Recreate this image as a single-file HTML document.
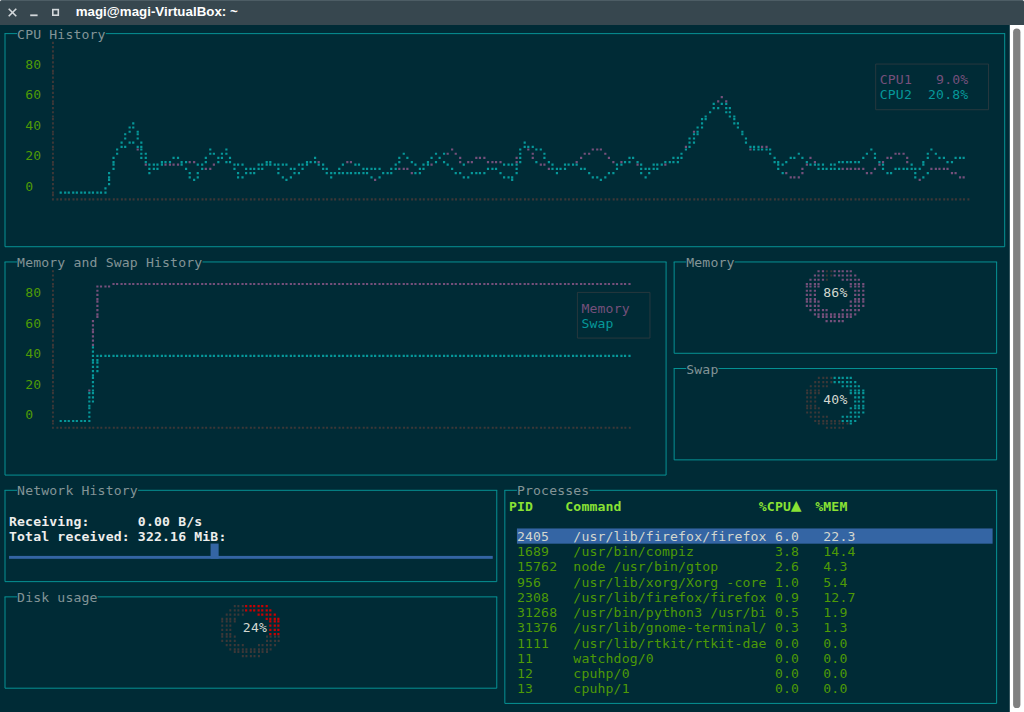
<!DOCTYPE html>
<html><head><meta charset="utf-8"><title>magi@magi-VirtualBox: ~</title>
<style>
html,body{margin:0;padding:0;}
body{width:1024px;height:712px;overflow:hidden;position:relative;background:#002b36;}
#tb{position:absolute;left:0;top:0;width:1024px;height:25px;background:#37474f;border-top:1px solid #4d5d65;box-sizing:border-box;}
#title{position:absolute;left:75.7px;top:3.0px;transform:translateY(0.45px);font:bold 13.3px/18px "Liberation Sans",sans-serif;color:#fff;white-space:pre;letter-spacing:0.02px}
#term{position:absolute;left:0;top:0;width:1024px;height:712px;}
svg{position:absolute;left:0;top:0}
.t{position:absolute;white-space:pre;font-family:"DejaVu Sans Mono","Liberation Mono",monospace;font-size:13.14px;line-height:15.223px;height:15.223px;letter-spacing:0.1511px;color:#839496}
.lab{color:#839496}
.g{color:#4e9a06} .m{color:#75507b} .c{color:#06989a} .w{color:#d3d7cf}
.bw{color:#eeeeec;font-weight:bold} .hb{color:#8ae234;font-weight:bold} .s{color:#d3d7cf}
#tri{position:absolute;left:790.7px;top:497.0px;font:14px/16px "DejaVu Sans","Liberation Sans",sans-serif;color:#8ae234;white-space:pre}
</style></head><body>
<div id="tb"></div>
<svg width="70" height="25" viewBox="0 0 70 25" fill="none" stroke="#d3d8db">
<path d="M8.7 8.7l7.6 7.6M16.3 8.7l-7.6 7.6" stroke-width="1.6"/>
<path d="M30.2 15.3h7.4" stroke-width="1.8"/>
<rect x="52.8" y="9.6" width="5.5" height="5.6" stroke-width="1.6"/>
</svg>
<div id="title">magi@magi-VirtualBox: ~</div>


<svg id="gfx" width="1024" height="712" viewBox="0 0 1024 712" fill="none">
<rect x="1009.8" y="25" width="14.2" height="687" fill="#fff"/>
<rect x="0" y="0" width="1.1" height="1.1" fill="#c3c8cb"/><rect x="1022.9" y="0" width="1.1" height="1.1" fill="#c3c8cb"/>
<rect x="1013.1" y="28.5" width="7.3" height="679.6" rx="3.65" fill="#808080"/>
<rect x="516.94" y="528.46" width="475.66" height="15.22" fill="#3465a4"/>
<path d="M4.53 33.61H17.09" stroke="#06989a" stroke-width="0.95"/>
<path d="M105.78 33.61H1005.16" stroke="#06989a" stroke-width="0.95"/>
<path d="M5.00 246.73H1004.69" stroke="#06989a" stroke-width="0.95"/>
<path d="M5.00 33.61V246.73" stroke="#06989a" stroke-width="0.95"/>
<path d="M1004.69 33.61V246.73" stroke="#06989a" stroke-width="0.95"/>
<path d="M59.61 191.54h2.18v2.18h-2.18zM64.06 191.54h2.18v2.18h-2.18zM67.68 191.54h2.18v2.18h-2.18zM72.13 191.54h2.18v2.18h-2.18zM75.74 191.54h2.18v2.18h-2.18zM80.19 191.54h2.18v2.18h-2.18zM83.80 191.54h2.18v2.18h-2.18zM88.25 191.54h2.18v2.18h-2.18zM91.86 191.54h2.18v2.18h-2.18zM96.31 191.54h2.18v2.18h-2.18zM99.92 191.54h2.18v2.18h-2.18zM104.37 187.29h2.18v2.18h-2.18zM104.37 191.54h2.18v2.18h-2.18zM107.99 172.07h2.18v2.18h-2.18zM107.99 176.32h2.18v2.18h-2.18zM107.99 178.84h2.18v2.18h-2.18zM107.99 183.09h2.18v2.18h-2.18zM112.44 156.84h2.18v2.18h-2.18zM112.44 161.09h2.18v2.18h-2.18zM112.44 163.62h2.18v2.18h-2.18zM112.44 167.87h2.18v2.18h-2.18zM116.05 148.39h2.18v2.18h-2.18zM116.05 152.64h2.18v2.18h-2.18zM120.50 141.62h2.18v2.18h-2.18zM120.50 145.87h2.18v2.18h-2.18zM124.11 133.17h2.18v2.18h-2.18zM124.11 137.42h2.18v2.18h-2.18zM124.11 145.87h2.18v2.18h-2.18zM128.56 126.40h2.18v2.18h-2.18zM128.56 130.65h2.18v2.18h-2.18zM128.56 141.62h2.18v2.18h-2.18zM132.17 122.20h2.18v2.18h-2.18zM132.17 126.40h2.18v2.18h-2.18zM132.17 141.62h2.18v2.18h-2.18zM136.62 130.65h2.18v2.18h-2.18zM136.62 133.17h2.18v2.18h-2.18zM136.62 137.42h2.18v2.18h-2.18zM136.62 145.87h2.18v2.18h-2.18zM140.23 141.62h2.18v2.18h-2.18zM140.23 145.87h2.18v2.18h-2.18zM140.23 148.39h2.18v2.18h-2.18zM140.23 152.64h2.18v2.18h-2.18zM140.23 156.84h2.18v2.18h-2.18zM144.68 152.64h2.18v2.18h-2.18zM144.68 156.84h2.18v2.18h-2.18zM144.68 161.09h2.18v2.18h-2.18zM148.30 163.62h2.18v2.18h-2.18zM148.30 167.87h2.18v2.18h-2.18zM148.30 172.07h2.18v2.18h-2.18zM152.75 163.62h2.18v2.18h-2.18zM152.75 167.87h2.18v2.18h-2.18zM156.36 163.62h2.18v2.18h-2.18zM156.36 167.87h2.18v2.18h-2.18zM160.81 161.09h2.18v2.18h-2.18zM160.81 163.62h2.18v2.18h-2.18zM164.42 161.09h2.18v2.18h-2.18zM168.87 161.09h2.18v2.18h-2.18zM172.48 156.84h2.18v2.18h-2.18zM176.93 156.84h2.18v2.18h-2.18zM180.54 161.09h2.18v2.18h-2.18zM180.54 163.62h2.18v2.18h-2.18zM184.99 161.09h2.18v2.18h-2.18zM184.99 167.87h2.18v2.18h-2.18zM188.61 172.07h2.18v2.18h-2.18zM188.61 176.32h2.18v2.18h-2.18zM193.06 178.84h2.18v2.18h-2.18zM196.67 163.62h2.18v2.18h-2.18zM196.67 172.07h2.18v2.18h-2.18zM196.67 176.32h2.18v2.18h-2.18zM201.12 163.62h2.18v2.18h-2.18zM201.12 167.87h2.18v2.18h-2.18zM204.73 156.84h2.18v2.18h-2.18zM204.73 161.09h2.18v2.18h-2.18zM209.18 148.39h2.18v2.18h-2.18zM209.18 152.64h2.18v2.18h-2.18zM212.79 152.64h2.18v2.18h-2.18zM217.24 156.84h2.18v2.18h-2.18zM217.24 161.09h2.18v2.18h-2.18zM220.85 152.64h2.18v2.18h-2.18zM220.85 156.84h2.18v2.18h-2.18zM225.30 148.39h2.18v2.18h-2.18zM225.30 152.64h2.18v2.18h-2.18zM225.30 161.09h2.18v2.18h-2.18zM228.92 156.84h2.18v2.18h-2.18zM228.92 161.09h2.18v2.18h-2.18zM233.37 163.62h2.18v2.18h-2.18zM233.37 167.87h2.18v2.18h-2.18zM236.98 163.62h2.18v2.18h-2.18zM236.98 172.07h2.18v2.18h-2.18zM236.98 176.32h2.18v2.18h-2.18zM241.43 163.62h2.18v2.18h-2.18zM241.43 176.32h2.18v2.18h-2.18zM245.04 167.87h2.18v2.18h-2.18zM245.04 172.07h2.18v2.18h-2.18zM249.49 167.87h2.18v2.18h-2.18zM249.49 172.07h2.18v2.18h-2.18zM253.10 167.87h2.18v2.18h-2.18zM253.10 172.07h2.18v2.18h-2.18zM257.55 163.62h2.18v2.18h-2.18zM257.55 167.87h2.18v2.18h-2.18zM261.16 163.62h2.18v2.18h-2.18zM261.16 167.87h2.18v2.18h-2.18zM265.61 161.09h2.18v2.18h-2.18zM265.61 163.62h2.18v2.18h-2.18zM269.23 161.09h2.18v2.18h-2.18zM269.23 163.62h2.18v2.18h-2.18zM273.68 163.62h2.18v2.18h-2.18zM277.29 163.62h2.18v2.18h-2.18zM277.29 167.87h2.18v2.18h-2.18zM277.29 172.07h2.18v2.18h-2.18zM281.74 163.62h2.18v2.18h-2.18zM281.74 176.32h2.18v2.18h-2.18zM285.35 163.62h2.18v2.18h-2.18zM285.35 178.84h2.18v2.18h-2.18zM289.80 167.87h2.18v2.18h-2.18zM289.80 176.32h2.18v2.18h-2.18zM293.41 167.87h2.18v2.18h-2.18zM293.41 172.07h2.18v2.18h-2.18zM297.86 163.62h2.18v2.18h-2.18zM297.86 172.07h2.18v2.18h-2.18zM301.47 163.62h2.18v2.18h-2.18zM301.47 167.87h2.18v2.18h-2.18zM305.92 161.09h2.18v2.18h-2.18zM305.92 163.62h2.18v2.18h-2.18zM309.54 161.09h2.18v2.18h-2.18zM313.99 156.84h2.18v2.18h-2.18zM313.99 161.09h2.18v2.18h-2.18zM317.60 163.62h2.18v2.18h-2.18zM322.05 163.62h2.18v2.18h-2.18zM322.05 167.87h2.18v2.18h-2.18zM325.66 167.87h2.18v2.18h-2.18zM325.66 172.07h2.18v2.18h-2.18zM330.11 172.07h2.18v2.18h-2.18zM330.11 176.32h2.18v2.18h-2.18zM333.72 172.07h2.18v2.18h-2.18zM338.17 167.87h2.18v2.18h-2.18zM338.17 172.07h2.18v2.18h-2.18zM341.78 163.62h2.18v2.18h-2.18zM341.78 172.07h2.18v2.18h-2.18zM346.23 172.07h2.18v2.18h-2.18zM349.85 172.07h2.18v2.18h-2.18zM354.30 163.62h2.18v2.18h-2.18zM354.30 172.07h2.18v2.18h-2.18zM357.91 163.62h2.18v2.18h-2.18zM357.91 172.07h2.18v2.18h-2.18zM362.36 167.87h2.18v2.18h-2.18zM362.36 172.07h2.18v2.18h-2.18zM365.97 167.87h2.18v2.18h-2.18zM365.97 172.07h2.18v2.18h-2.18zM370.42 167.87h2.18v2.18h-2.18zM370.42 176.32h2.18v2.18h-2.18zM374.03 167.87h2.18v2.18h-2.18zM378.48 167.87h2.18v2.18h-2.18zM378.48 176.32h2.18v2.18h-2.18zM382.09 172.07h2.18v2.18h-2.18zM386.54 172.07h2.18v2.18h-2.18zM390.16 167.87h2.18v2.18h-2.18zM390.16 172.07h2.18v2.18h-2.18zM394.61 163.62h2.18v2.18h-2.18zM394.61 167.87h2.18v2.18h-2.18zM398.22 156.84h2.18v2.18h-2.18zM398.22 161.09h2.18v2.18h-2.18zM402.67 152.64h2.18v2.18h-2.18zM406.28 156.84h2.18v2.18h-2.18zM410.73 161.09h2.18v2.18h-2.18zM414.34 163.62h2.18v2.18h-2.18zM414.34 172.07h2.18v2.18h-2.18zM418.79 167.87h2.18v2.18h-2.18zM418.79 172.07h2.18v2.18h-2.18zM422.40 163.62h2.18v2.18h-2.18zM422.40 167.87h2.18v2.18h-2.18zM426.85 161.09h2.18v2.18h-2.18zM426.85 163.62h2.18v2.18h-2.18zM430.47 156.84h2.18v2.18h-2.18zM434.92 152.64h2.18v2.18h-2.18zM434.92 161.09h2.18v2.18h-2.18zM438.53 156.84h2.18v2.18h-2.18zM442.98 152.64h2.18v2.18h-2.18zM442.98 161.09h2.18v2.18h-2.18zM446.59 163.62h2.18v2.18h-2.18zM451.04 167.87h2.18v2.18h-2.18zM454.65 172.07h2.18v2.18h-2.18zM459.10 172.07h2.18v2.18h-2.18zM462.71 163.62h2.18v2.18h-2.18zM462.71 176.32h2.18v2.18h-2.18zM467.16 176.32h2.18v2.18h-2.18zM470.78 172.07h2.18v2.18h-2.18zM475.23 172.07h2.18v2.18h-2.18zM478.84 172.07h2.18v2.18h-2.18zM483.29 172.07h2.18v2.18h-2.18zM486.90 167.87h2.18v2.18h-2.18zM491.35 167.87h2.18v2.18h-2.18zM494.96 167.87h2.18v2.18h-2.18zM499.41 172.07h2.18v2.18h-2.18zM503.02 163.62h2.18v2.18h-2.18zM503.02 176.32h2.18v2.18h-2.18zM507.47 163.62h2.18v2.18h-2.18zM507.47 176.32h2.18v2.18h-2.18zM511.09 163.62h2.18v2.18h-2.18zM511.09 176.32h2.18v2.18h-2.18zM511.09 178.84h2.18v2.18h-2.18zM515.54 163.62h2.18v2.18h-2.18zM515.54 167.87h2.18v2.18h-2.18zM515.54 172.07h2.18v2.18h-2.18zM519.15 148.39h2.18v2.18h-2.18zM519.15 152.64h2.18v2.18h-2.18zM519.15 156.84h2.18v2.18h-2.18zM519.15 161.09h2.18v2.18h-2.18zM523.60 141.62h2.18v2.18h-2.18zM523.60 145.87h2.18v2.18h-2.18zM527.21 145.87h2.18v2.18h-2.18zM531.66 145.87h2.18v2.18h-2.18zM535.27 148.39h2.18v2.18h-2.18zM535.27 161.09h2.18v2.18h-2.18zM539.72 148.39h2.18v2.18h-2.18zM543.33 152.64h2.18v2.18h-2.18zM543.33 156.84h2.18v2.18h-2.18zM547.78 161.09h2.18v2.18h-2.18zM551.40 163.62h2.18v2.18h-2.18zM551.40 167.87h2.18v2.18h-2.18zM555.85 167.87h2.18v2.18h-2.18zM555.85 172.07h2.18v2.18h-2.18zM559.46 167.87h2.18v2.18h-2.18zM563.91 163.62h2.18v2.18h-2.18zM563.91 167.87h2.18v2.18h-2.18zM567.52 163.62h2.18v2.18h-2.18zM571.97 163.62h2.18v2.18h-2.18zM575.58 163.62h2.18v2.18h-2.18zM580.03 167.87h2.18v2.18h-2.18zM583.64 167.87h2.18v2.18h-2.18zM588.09 172.07h2.18v2.18h-2.18zM591.71 176.32h2.18v2.18h-2.18zM596.16 176.32h2.18v2.18h-2.18zM599.77 178.84h2.18v2.18h-2.18zM604.22 176.32h2.18v2.18h-2.18zM607.83 172.07h2.18v2.18h-2.18zM612.28 172.07h2.18v2.18h-2.18zM615.89 163.62h2.18v2.18h-2.18zM615.89 167.87h2.18v2.18h-2.18zM620.34 163.62h2.18v2.18h-2.18zM623.95 161.09h2.18v2.18h-2.18zM628.40 156.84h2.18v2.18h-2.18zM628.40 161.09h2.18v2.18h-2.18zM632.02 156.84h2.18v2.18h-2.18zM636.47 161.09h2.18v2.18h-2.18zM640.08 163.62h2.18v2.18h-2.18zM640.08 167.87h2.18v2.18h-2.18zM640.08 172.07h2.18v2.18h-2.18zM644.53 167.87h2.18v2.18h-2.18zM644.53 176.32h2.18v2.18h-2.18zM648.14 167.87h2.18v2.18h-2.18zM648.14 172.07h2.18v2.18h-2.18zM652.59 163.62h2.18v2.18h-2.18zM652.59 167.87h2.18v2.18h-2.18zM656.20 163.62h2.18v2.18h-2.18zM656.20 167.87h2.18v2.18h-2.18zM660.65 163.62h2.18v2.18h-2.18zM664.26 161.09h2.18v2.18h-2.18zM668.71 161.09h2.18v2.18h-2.18zM672.33 156.84h2.18v2.18h-2.18zM672.33 161.09h2.18v2.18h-2.18zM676.78 156.84h2.18v2.18h-2.18zM676.78 161.09h2.18v2.18h-2.18zM680.39 152.64h2.18v2.18h-2.18zM680.39 156.84h2.18v2.18h-2.18zM684.84 148.39h2.18v2.18h-2.18zM688.45 137.42h2.18v2.18h-2.18zM688.45 141.62h2.18v2.18h-2.18zM688.45 145.87h2.18v2.18h-2.18zM692.90 133.17h2.18v2.18h-2.18zM692.90 137.42h2.18v2.18h-2.18zM692.90 141.62h2.18v2.18h-2.18zM696.51 126.40h2.18v2.18h-2.18zM696.51 130.65h2.18v2.18h-2.18zM696.51 133.17h2.18v2.18h-2.18zM700.96 117.95h2.18v2.18h-2.18zM700.96 122.20h2.18v2.18h-2.18zM700.96 126.40h2.18v2.18h-2.18zM704.57 115.43h2.18v2.18h-2.18zM704.57 117.95h2.18v2.18h-2.18zM709.02 111.18h2.18v2.18h-2.18zM712.64 102.73h2.18v2.18h-2.18zM712.64 106.98h2.18v2.18h-2.18zM717.09 106.98h2.18v2.18h-2.18zM720.70 102.73h2.18v2.18h-2.18zM725.15 102.73h2.18v2.18h-2.18zM725.15 106.98h2.18v2.18h-2.18zM725.15 111.18h2.18v2.18h-2.18zM728.76 106.98h2.18v2.18h-2.18zM728.76 111.18h2.18v2.18h-2.18zM728.76 115.43h2.18v2.18h-2.18zM733.21 115.43h2.18v2.18h-2.18zM733.21 117.95h2.18v2.18h-2.18zM733.21 122.20h2.18v2.18h-2.18zM736.82 122.20h2.18v2.18h-2.18zM736.82 126.40h2.18v2.18h-2.18zM741.27 130.65h2.18v2.18h-2.18zM741.27 133.17h2.18v2.18h-2.18zM744.88 137.42h2.18v2.18h-2.18zM744.88 141.62h2.18v2.18h-2.18zM749.33 145.87h2.18v2.18h-2.18zM752.95 145.87h2.18v2.18h-2.18zM752.95 148.39h2.18v2.18h-2.18zM757.40 145.87h2.18v2.18h-2.18zM757.40 148.39h2.18v2.18h-2.18zM761.01 148.39h2.18v2.18h-2.18zM765.46 148.39h2.18v2.18h-2.18zM769.07 148.39h2.18v2.18h-2.18zM769.07 152.64h2.18v2.18h-2.18zM773.52 156.84h2.18v2.18h-2.18zM773.52 161.09h2.18v2.18h-2.18zM777.13 161.09h2.18v2.18h-2.18zM777.13 163.62h2.18v2.18h-2.18zM777.13 167.87h2.18v2.18h-2.18zM781.58 163.62h2.18v2.18h-2.18zM781.58 172.07h2.18v2.18h-2.18zM785.19 161.09h2.18v2.18h-2.18zM789.64 156.84h2.18v2.18h-2.18zM793.26 156.84h2.18v2.18h-2.18zM797.71 152.64h2.18v2.18h-2.18zM801.32 156.84h2.18v2.18h-2.18zM805.77 161.09h2.18v2.18h-2.18zM809.38 163.62h2.18v2.18h-2.18zM813.83 163.62h2.18v2.18h-2.18zM817.44 163.62h2.18v2.18h-2.18zM817.44 167.87h2.18v2.18h-2.18zM821.89 163.62h2.18v2.18h-2.18zM821.89 167.87h2.18v2.18h-2.18zM825.50 167.87h2.18v2.18h-2.18zM829.95 163.62h2.18v2.18h-2.18zM829.95 167.87h2.18v2.18h-2.18zM833.57 163.62h2.18v2.18h-2.18zM833.57 167.87h2.18v2.18h-2.18zM838.02 161.09h2.18v2.18h-2.18zM838.02 167.87h2.18v2.18h-2.18zM841.63 161.09h2.18v2.18h-2.18zM846.08 161.09h2.18v2.18h-2.18zM849.69 161.09h2.18v2.18h-2.18zM854.14 161.09h2.18v2.18h-2.18zM857.75 161.09h2.18v2.18h-2.18zM862.20 156.84h2.18v2.18h-2.18zM865.81 152.64h2.18v2.18h-2.18zM870.26 148.39h2.18v2.18h-2.18zM873.88 152.64h2.18v2.18h-2.18zM873.88 156.84h2.18v2.18h-2.18zM878.33 161.09h2.18v2.18h-2.18zM881.94 163.62h2.18v2.18h-2.18zM881.94 167.87h2.18v2.18h-2.18zM886.39 172.07h2.18v2.18h-2.18zM890.00 172.07h2.18v2.18h-2.18zM894.45 167.87h2.18v2.18h-2.18zM898.06 167.87h2.18v2.18h-2.18zM902.51 167.87h2.18v2.18h-2.18zM906.12 167.87h2.18v2.18h-2.18zM910.57 163.62h2.18v2.18h-2.18zM910.57 167.87h2.18v2.18h-2.18zM914.19 167.87h2.18v2.18h-2.18zM914.19 172.07h2.18v2.18h-2.18zM914.19 176.32h2.18v2.18h-2.18zM918.64 167.87h2.18v2.18h-2.18zM922.25 161.09h2.18v2.18h-2.18zM922.25 163.62h2.18v2.18h-2.18zM922.25 176.32h2.18v2.18h-2.18zM926.70 152.64h2.18v2.18h-2.18zM926.70 156.84h2.18v2.18h-2.18zM926.70 172.07h2.18v2.18h-2.18zM930.31 148.39h2.18v2.18h-2.18zM934.76 152.64h2.18v2.18h-2.18zM938.37 156.84h2.18v2.18h-2.18zM942.82 156.84h2.18v2.18h-2.18zM946.43 161.09h2.18v2.18h-2.18zM950.88 161.09h2.18v2.18h-2.18zM954.50 156.84h2.18v2.18h-2.18zM958.95 156.84h2.18v2.18h-2.18zM962.56 156.84h2.18v2.18h-2.18z" fill="#06989a"/>
<path d="M136.62 148.39h2.18v2.18h-2.18zM144.68 163.62h2.18v2.18h-2.18zM164.42 163.62h2.18v2.18h-2.18zM168.87 163.62h2.18v2.18h-2.18zM172.48 163.62h2.18v2.18h-2.18zM176.93 163.62h2.18v2.18h-2.18zM188.61 161.09h2.18v2.18h-2.18zM193.06 161.09h2.18v2.18h-2.18zM204.73 167.87h2.18v2.18h-2.18zM209.18 167.87h2.18v2.18h-2.18zM212.79 163.62h2.18v2.18h-2.18zM317.60 161.09h2.18v2.18h-2.18zM346.23 161.09h2.18v2.18h-2.18zM349.85 161.09h2.18v2.18h-2.18zM374.03 178.84h2.18v2.18h-2.18zM398.22 167.87h2.18v2.18h-2.18zM402.67 167.87h2.18v2.18h-2.18zM406.28 167.87h2.18v2.18h-2.18zM410.73 172.07h2.18v2.18h-2.18zM430.47 163.62h2.18v2.18h-2.18zM446.59 152.64h2.18v2.18h-2.18zM451.04 148.39h2.18v2.18h-2.18zM454.65 152.64h2.18v2.18h-2.18zM459.10 156.84h2.18v2.18h-2.18zM459.10 161.09h2.18v2.18h-2.18zM467.16 161.09h2.18v2.18h-2.18zM470.78 161.09h2.18v2.18h-2.18zM475.23 156.84h2.18v2.18h-2.18zM478.84 156.84h2.18v2.18h-2.18zM483.29 156.84h2.18v2.18h-2.18zM486.90 161.09h2.18v2.18h-2.18zM491.35 161.09h2.18v2.18h-2.18zM494.96 161.09h2.18v2.18h-2.18zM499.41 161.09h2.18v2.18h-2.18zM515.54 156.84h2.18v2.18h-2.18zM515.54 161.09h2.18v2.18h-2.18zM527.21 148.39h2.18v2.18h-2.18zM531.66 152.64h2.18v2.18h-2.18zM531.66 156.84h2.18v2.18h-2.18zM539.72 163.62h2.18v2.18h-2.18zM543.33 163.62h2.18v2.18h-2.18zM547.78 167.87h2.18v2.18h-2.18zM575.58 161.09h2.18v2.18h-2.18zM580.03 156.84h2.18v2.18h-2.18zM583.64 152.64h2.18v2.18h-2.18zM588.09 152.64h2.18v2.18h-2.18zM591.71 148.39h2.18v2.18h-2.18zM596.16 148.39h2.18v2.18h-2.18zM599.77 148.39h2.18v2.18h-2.18zM604.22 152.64h2.18v2.18h-2.18zM607.83 156.84h2.18v2.18h-2.18zM612.28 161.09h2.18v2.18h-2.18zM620.34 161.09h2.18v2.18h-2.18zM636.47 163.62h2.18v2.18h-2.18zM664.26 163.62h2.18v2.18h-2.18zM684.84 145.87h2.18v2.18h-2.18zM692.90 130.65h2.18v2.18h-2.18zM717.09 100.20h2.18v2.18h-2.18zM720.70 95.95h2.18v2.18h-2.18zM725.15 100.20h2.18v2.18h-2.18zM749.33 148.39h2.18v2.18h-2.18zM761.01 145.87h2.18v2.18h-2.18zM765.46 145.87h2.18v2.18h-2.18zM785.19 172.07h2.18v2.18h-2.18zM789.64 176.32h2.18v2.18h-2.18zM793.26 176.32h2.18v2.18h-2.18zM797.71 176.32h2.18v2.18h-2.18zM801.32 167.87h2.18v2.18h-2.18zM801.32 172.07h2.18v2.18h-2.18zM805.77 163.62h2.18v2.18h-2.18zM809.38 156.84h2.18v2.18h-2.18zM813.83 161.09h2.18v2.18h-2.18zM841.63 167.87h2.18v2.18h-2.18zM846.08 167.87h2.18v2.18h-2.18zM849.69 167.87h2.18v2.18h-2.18zM854.14 167.87h2.18v2.18h-2.18zM857.75 167.87h2.18v2.18h-2.18zM862.20 167.87h2.18v2.18h-2.18zM865.81 172.07h2.18v2.18h-2.18zM870.26 172.07h2.18v2.18h-2.18zM873.88 167.87h2.18v2.18h-2.18zM878.33 163.62h2.18v2.18h-2.18zM881.94 161.09h2.18v2.18h-2.18zM886.39 156.84h2.18v2.18h-2.18zM890.00 156.84h2.18v2.18h-2.18zM894.45 152.64h2.18v2.18h-2.18zM898.06 152.64h2.18v2.18h-2.18zM902.51 152.64h2.18v2.18h-2.18zM906.12 156.84h2.18v2.18h-2.18zM906.12 161.09h2.18v2.18h-2.18zM918.64 178.84h2.18v2.18h-2.18zM930.31 167.87h2.18v2.18h-2.18zM934.76 167.87h2.18v2.18h-2.18zM938.37 167.87h2.18v2.18h-2.18zM942.82 167.87h2.18v2.18h-2.18zM946.43 167.87h2.18v2.18h-2.18zM950.88 172.07h2.18v2.18h-2.18zM954.50 172.07h2.18v2.18h-2.18zM958.95 176.32h2.18v2.18h-2.18zM962.56 176.32h2.18v2.18h-2.18z" fill="#75507b"/>
<path d="M51.94 41.83h2.0v2.18h-2.0zM51.94 46.08h2.0v2.18h-2.0zM51.94 50.28h2.0v2.18h-2.0zM51.94 54.53h2.0v2.18h-2.0zM51.94 57.06h2.0v2.18h-2.0zM51.94 61.31h2.0v2.18h-2.0zM51.94 65.51h2.0v2.18h-2.0zM51.94 69.76h2.0v2.18h-2.0zM51.94 72.28h2.0v2.18h-2.0zM51.94 76.53h2.0v2.18h-2.0zM51.94 80.73h2.0v2.18h-2.0zM51.94 84.98h2.0v2.18h-2.0zM51.94 87.50h2.0v2.18h-2.0zM51.94 91.75h2.0v2.18h-2.0zM51.94 95.95h2.0v2.18h-2.0zM51.94 100.20h2.0v2.18h-2.0zM51.94 102.73h2.0v2.18h-2.0zM51.94 106.98h2.0v2.18h-2.0zM51.94 111.18h2.0v2.18h-2.0zM51.94 115.43h2.0v2.18h-2.0zM51.94 117.95h2.0v2.18h-2.0zM51.94 122.20h2.0v2.18h-2.0zM51.94 126.40h2.0v2.18h-2.0zM51.94 130.65h2.0v2.18h-2.0zM51.94 133.17h2.0v2.18h-2.0zM51.94 137.42h2.0v2.18h-2.0zM51.94 141.62h2.0v2.18h-2.0zM51.94 145.87h2.0v2.18h-2.0zM51.94 148.39h2.0v2.18h-2.0zM51.94 152.64h2.0v2.18h-2.0zM51.94 156.84h2.0v2.18h-2.0zM51.94 161.09h2.0v2.18h-2.0zM51.94 163.62h2.0v2.18h-2.0zM51.94 167.87h2.0v2.18h-2.0zM51.94 172.07h2.0v2.18h-2.0zM51.94 176.32h2.0v2.18h-2.0zM51.94 178.84h2.0v2.18h-2.0zM51.94 183.09h2.0v2.18h-2.0zM51.94 187.29h2.0v2.18h-2.0zM51.94 191.54h2.0v2.18h-2.0zM51.94 194.06h2.0v2.18h-2.0zM51.94 198.31h2.0v2.18h-2.0zM56.39 198.31h2.0v2.18h-2.0zM60.00 198.31h2.0v2.18h-2.0zM64.45 198.31h2.0v2.18h-2.0zM68.07 198.31h2.0v2.18h-2.0zM72.52 198.31h2.0v2.18h-2.0zM76.13 198.31h2.0v2.18h-2.0zM80.58 198.31h2.0v2.18h-2.0zM84.19 198.31h2.0v2.18h-2.0zM88.64 198.31h2.0v2.18h-2.0zM92.25 198.31h2.0v2.18h-2.0zM96.70 198.31h2.0v2.18h-2.0zM100.31 198.31h2.0v2.18h-2.0zM104.76 198.31h2.0v2.18h-2.0zM108.38 198.31h2.0v2.18h-2.0zM112.83 198.31h2.0v2.18h-2.0zM116.44 198.31h2.0v2.18h-2.0zM120.89 198.31h2.0v2.18h-2.0zM124.50 198.31h2.0v2.18h-2.0zM128.95 198.31h2.0v2.18h-2.0zM132.56 198.31h2.0v2.18h-2.0zM137.01 198.31h2.0v2.18h-2.0zM140.62 198.31h2.0v2.18h-2.0zM145.07 198.31h2.0v2.18h-2.0zM148.69 198.31h2.0v2.18h-2.0zM153.14 198.31h2.0v2.18h-2.0zM156.75 198.31h2.0v2.18h-2.0zM161.20 198.31h2.0v2.18h-2.0zM164.81 198.31h2.0v2.18h-2.0zM169.26 198.31h2.0v2.18h-2.0zM172.87 198.31h2.0v2.18h-2.0zM177.32 198.31h2.0v2.18h-2.0zM180.93 198.31h2.0v2.18h-2.0zM185.38 198.31h2.0v2.18h-2.0zM189.00 198.31h2.0v2.18h-2.0zM193.45 198.31h2.0v2.18h-2.0zM197.06 198.31h2.0v2.18h-2.0zM201.51 198.31h2.0v2.18h-2.0zM205.12 198.31h2.0v2.18h-2.0zM209.57 198.31h2.0v2.18h-2.0zM213.18 198.31h2.0v2.18h-2.0zM217.63 198.31h2.0v2.18h-2.0zM221.24 198.31h2.0v2.18h-2.0zM225.69 198.31h2.0v2.18h-2.0zM229.31 198.31h2.0v2.18h-2.0zM233.76 198.31h2.0v2.18h-2.0zM237.37 198.31h2.0v2.18h-2.0zM241.82 198.31h2.0v2.18h-2.0zM245.43 198.31h2.0v2.18h-2.0zM249.88 198.31h2.0v2.18h-2.0zM253.49 198.31h2.0v2.18h-2.0zM257.94 198.31h2.0v2.18h-2.0zM261.55 198.31h2.0v2.18h-2.0zM266.00 198.31h2.0v2.18h-2.0zM269.62 198.31h2.0v2.18h-2.0zM274.07 198.31h2.0v2.18h-2.0zM277.68 198.31h2.0v2.18h-2.0zM282.13 198.31h2.0v2.18h-2.0zM285.74 198.31h2.0v2.18h-2.0zM290.19 198.31h2.0v2.18h-2.0zM293.80 198.31h2.0v2.18h-2.0zM298.25 198.31h2.0v2.18h-2.0zM301.86 198.31h2.0v2.18h-2.0zM306.31 198.31h2.0v2.18h-2.0zM309.93 198.31h2.0v2.18h-2.0zM314.38 198.31h2.0v2.18h-2.0zM317.99 198.31h2.0v2.18h-2.0zM322.44 198.31h2.0v2.18h-2.0zM326.05 198.31h2.0v2.18h-2.0zM330.50 198.31h2.0v2.18h-2.0zM334.11 198.31h2.0v2.18h-2.0zM338.56 198.31h2.0v2.18h-2.0zM342.17 198.31h2.0v2.18h-2.0zM346.62 198.31h2.0v2.18h-2.0zM350.24 198.31h2.0v2.18h-2.0zM354.69 198.31h2.0v2.18h-2.0zM358.30 198.31h2.0v2.18h-2.0zM362.75 198.31h2.0v2.18h-2.0zM366.36 198.31h2.0v2.18h-2.0zM370.81 198.31h2.0v2.18h-2.0zM374.42 198.31h2.0v2.18h-2.0zM378.87 198.31h2.0v2.18h-2.0zM382.48 198.31h2.0v2.18h-2.0zM386.93 198.31h2.0v2.18h-2.0zM390.55 198.31h2.0v2.18h-2.0zM395.00 198.31h2.0v2.18h-2.0zM398.61 198.31h2.0v2.18h-2.0zM403.06 198.31h2.0v2.18h-2.0zM406.67 198.31h2.0v2.18h-2.0zM411.12 198.31h2.0v2.18h-2.0zM414.73 198.31h2.0v2.18h-2.0zM419.18 198.31h2.0v2.18h-2.0zM422.79 198.31h2.0v2.18h-2.0zM427.24 198.31h2.0v2.18h-2.0zM430.86 198.31h2.0v2.18h-2.0zM435.31 198.31h2.0v2.18h-2.0zM438.92 198.31h2.0v2.18h-2.0zM443.37 198.31h2.0v2.18h-2.0zM446.98 198.31h2.0v2.18h-2.0zM451.43 198.31h2.0v2.18h-2.0zM455.04 198.31h2.0v2.18h-2.0zM459.49 198.31h2.0v2.18h-2.0zM463.10 198.31h2.0v2.18h-2.0zM467.55 198.31h2.0v2.18h-2.0zM471.17 198.31h2.0v2.18h-2.0zM475.62 198.31h2.0v2.18h-2.0zM479.23 198.31h2.0v2.18h-2.0zM483.68 198.31h2.0v2.18h-2.0zM487.29 198.31h2.0v2.18h-2.0zM491.74 198.31h2.0v2.18h-2.0zM495.35 198.31h2.0v2.18h-2.0zM499.80 198.31h2.0v2.18h-2.0zM503.41 198.31h2.0v2.18h-2.0zM507.86 198.31h2.0v2.18h-2.0zM511.48 198.31h2.0v2.18h-2.0zM515.93 198.31h2.0v2.18h-2.0zM519.54 198.31h2.0v2.18h-2.0zM523.99 198.31h2.0v2.18h-2.0zM527.60 198.31h2.0v2.18h-2.0zM532.05 198.31h2.0v2.18h-2.0zM535.66 198.31h2.0v2.18h-2.0zM540.11 198.31h2.0v2.18h-2.0zM543.72 198.31h2.0v2.18h-2.0zM548.17 198.31h2.0v2.18h-2.0zM551.79 198.31h2.0v2.18h-2.0zM556.24 198.31h2.0v2.18h-2.0zM559.85 198.31h2.0v2.18h-2.0zM564.30 198.31h2.0v2.18h-2.0zM567.91 198.31h2.0v2.18h-2.0zM572.36 198.31h2.0v2.18h-2.0zM575.97 198.31h2.0v2.18h-2.0zM580.42 198.31h2.0v2.18h-2.0zM584.03 198.31h2.0v2.18h-2.0zM588.48 198.31h2.0v2.18h-2.0zM592.10 198.31h2.0v2.18h-2.0zM596.55 198.31h2.0v2.18h-2.0zM600.16 198.31h2.0v2.18h-2.0zM604.61 198.31h2.0v2.18h-2.0zM608.22 198.31h2.0v2.18h-2.0zM612.67 198.31h2.0v2.18h-2.0zM616.28 198.31h2.0v2.18h-2.0zM620.73 198.31h2.0v2.18h-2.0zM624.34 198.31h2.0v2.18h-2.0zM628.79 198.31h2.0v2.18h-2.0zM632.41 198.31h2.0v2.18h-2.0zM636.86 198.31h2.0v2.18h-2.0zM640.47 198.31h2.0v2.18h-2.0zM644.92 198.31h2.0v2.18h-2.0zM648.53 198.31h2.0v2.18h-2.0zM652.98 198.31h2.0v2.18h-2.0zM656.59 198.31h2.0v2.18h-2.0zM661.04 198.31h2.0v2.18h-2.0zM664.65 198.31h2.0v2.18h-2.0zM669.10 198.31h2.0v2.18h-2.0zM672.72 198.31h2.0v2.18h-2.0zM677.17 198.31h2.0v2.18h-2.0zM680.78 198.31h2.0v2.18h-2.0zM685.23 198.31h2.0v2.18h-2.0zM688.84 198.31h2.0v2.18h-2.0zM693.29 198.31h2.0v2.18h-2.0zM696.90 198.31h2.0v2.18h-2.0zM701.35 198.31h2.0v2.18h-2.0zM704.96 198.31h2.0v2.18h-2.0zM709.41 198.31h2.0v2.18h-2.0zM713.03 198.31h2.0v2.18h-2.0zM717.48 198.31h2.0v2.18h-2.0zM721.09 198.31h2.0v2.18h-2.0zM725.54 198.31h2.0v2.18h-2.0zM729.15 198.31h2.0v2.18h-2.0zM733.60 198.31h2.0v2.18h-2.0zM737.21 198.31h2.0v2.18h-2.0zM741.66 198.31h2.0v2.18h-2.0zM745.27 198.31h2.0v2.18h-2.0zM749.72 198.31h2.0v2.18h-2.0zM753.34 198.31h2.0v2.18h-2.0zM757.79 198.31h2.0v2.18h-2.0zM761.40 198.31h2.0v2.18h-2.0zM765.85 198.31h2.0v2.18h-2.0zM769.46 198.31h2.0v2.18h-2.0zM773.91 198.31h2.0v2.18h-2.0zM777.52 198.31h2.0v2.18h-2.0zM781.97 198.31h2.0v2.18h-2.0zM785.58 198.31h2.0v2.18h-2.0zM790.03 198.31h2.0v2.18h-2.0zM793.65 198.31h2.0v2.18h-2.0zM798.10 198.31h2.0v2.18h-2.0zM801.71 198.31h2.0v2.18h-2.0zM806.16 198.31h2.0v2.18h-2.0zM809.77 198.31h2.0v2.18h-2.0zM814.22 198.31h2.0v2.18h-2.0zM817.83 198.31h2.0v2.18h-2.0zM822.28 198.31h2.0v2.18h-2.0zM825.89 198.31h2.0v2.18h-2.0zM830.34 198.31h2.0v2.18h-2.0zM833.96 198.31h2.0v2.18h-2.0zM838.41 198.31h2.0v2.18h-2.0zM842.02 198.31h2.0v2.18h-2.0zM846.47 198.31h2.0v2.18h-2.0zM850.08 198.31h2.0v2.18h-2.0zM854.53 198.31h2.0v2.18h-2.0zM858.14 198.31h2.0v2.18h-2.0zM862.59 198.31h2.0v2.18h-2.0zM866.20 198.31h2.0v2.18h-2.0zM870.65 198.31h2.0v2.18h-2.0zM874.27 198.31h2.0v2.18h-2.0zM878.72 198.31h2.0v2.18h-2.0zM882.33 198.31h2.0v2.18h-2.0zM886.78 198.31h2.0v2.18h-2.0zM890.39 198.31h2.0v2.18h-2.0zM894.84 198.31h2.0v2.18h-2.0zM898.45 198.31h2.0v2.18h-2.0zM902.90 198.31h2.0v2.18h-2.0zM906.51 198.31h2.0v2.18h-2.0zM910.96 198.31h2.0v2.18h-2.0zM914.58 198.31h2.0v2.18h-2.0zM919.03 198.31h2.0v2.18h-2.0zM922.64 198.31h2.0v2.18h-2.0zM927.09 198.31h2.0v2.18h-2.0zM930.70 198.31h2.0v2.18h-2.0zM935.15 198.31h2.0v2.18h-2.0zM938.76 198.31h2.0v2.18h-2.0zM943.21 198.31h2.0v2.18h-2.0zM946.82 198.31h2.0v2.18h-2.0zM951.27 198.31h2.0v2.18h-2.0zM954.89 198.31h2.0v2.18h-2.0zM959.34 198.31h2.0v2.18h-2.0zM962.95 198.31h2.0v2.18h-2.0zM967.40 198.31h2.0v2.18h-2.0z" fill="#3c3838"/>
<path d="M875.70 64.06H988.56" stroke="#2b3a40" stroke-width="0.9"/>
<path d="M875.70 109.73H988.56" stroke="#2b3a40" stroke-width="0.9"/>
<path d="M875.70 64.06V109.73" stroke="#2b3a40" stroke-width="0.9"/>
<path d="M988.56 64.06V109.73" stroke="#2b3a40" stroke-width="0.9"/>
<path d="M4.53 261.96H17.09" stroke="#06989a" stroke-width="0.95"/>
<path d="M202.52 261.96H666.56" stroke="#06989a" stroke-width="0.95"/>
<path d="M5.00 475.08H666.08" stroke="#06989a" stroke-width="0.95"/>
<path d="M5.00 261.96V475.08" stroke="#06989a" stroke-width="0.95"/>
<path d="M666.08 261.96V475.08" stroke="#06989a" stroke-width="0.95"/>
<path d="M59.61 419.89h2.18v2.18h-2.18zM64.06 419.89h2.18v2.18h-2.18zM67.68 419.89h2.18v2.18h-2.18zM72.13 419.89h2.18v2.18h-2.18zM75.74 419.89h2.18v2.18h-2.18zM80.19 419.89h2.18v2.18h-2.18zM83.80 419.89h2.18v2.18h-2.18zM88.25 391.96h2.18v2.18h-2.18zM88.25 396.21h2.18v2.18h-2.18zM88.25 400.41h2.18v2.18h-2.18zM88.25 404.66h2.18v2.18h-2.18zM88.25 407.19h2.18v2.18h-2.18zM88.25 411.44h2.18v2.18h-2.18zM88.25 415.64h2.18v2.18h-2.18zM88.25 419.89h2.18v2.18h-2.18zM91.86 346.29h2.18v2.18h-2.18zM91.86 350.54h2.18v2.18h-2.18zM91.86 354.74h2.18v2.18h-2.18zM91.86 358.99h2.18v2.18h-2.18zM91.86 361.52h2.18v2.18h-2.18zM91.86 365.77h2.18v2.18h-2.18zM91.86 369.97h2.18v2.18h-2.18zM91.86 374.22h2.18v2.18h-2.18zM91.86 376.74h2.18v2.18h-2.18zM91.86 380.99h2.18v2.18h-2.18zM91.86 385.19h2.18v2.18h-2.18zM91.86 389.44h2.18v2.18h-2.18zM91.86 391.96h2.18v2.18h-2.18zM91.86 396.21h2.18v2.18h-2.18zM91.86 400.41h2.18v2.18h-2.18zM96.31 354.74h2.18v2.18h-2.18zM96.31 358.99h2.18v2.18h-2.18zM96.31 361.52h2.18v2.18h-2.18zM96.31 365.77h2.18v2.18h-2.18zM96.31 369.97h2.18v2.18h-2.18zM99.92 354.74h2.18v2.18h-2.18zM104.37 354.74h2.18v2.18h-2.18zM107.99 354.74h2.18v2.18h-2.18zM112.44 354.74h2.18v2.18h-2.18zM116.05 354.74h2.18v2.18h-2.18zM120.50 354.74h2.18v2.18h-2.18zM124.11 354.74h2.18v2.18h-2.18zM128.56 354.74h2.18v2.18h-2.18zM132.17 354.74h2.18v2.18h-2.18zM136.62 354.74h2.18v2.18h-2.18zM140.23 354.74h2.18v2.18h-2.18zM144.68 354.74h2.18v2.18h-2.18zM148.30 354.74h2.18v2.18h-2.18zM152.75 354.74h2.18v2.18h-2.18zM156.36 354.74h2.18v2.18h-2.18zM160.81 354.74h2.18v2.18h-2.18zM164.42 354.74h2.18v2.18h-2.18zM168.87 354.74h2.18v2.18h-2.18zM172.48 354.74h2.18v2.18h-2.18zM176.93 354.74h2.18v2.18h-2.18zM180.54 354.74h2.18v2.18h-2.18zM184.99 354.74h2.18v2.18h-2.18zM188.61 354.74h2.18v2.18h-2.18zM193.06 354.74h2.18v2.18h-2.18zM196.67 354.74h2.18v2.18h-2.18zM201.12 354.74h2.18v2.18h-2.18zM204.73 354.74h2.18v2.18h-2.18zM209.18 354.74h2.18v2.18h-2.18zM212.79 354.74h2.18v2.18h-2.18zM217.24 354.74h2.18v2.18h-2.18zM220.85 354.74h2.18v2.18h-2.18zM225.30 354.74h2.18v2.18h-2.18zM228.92 354.74h2.18v2.18h-2.18zM233.37 354.74h2.18v2.18h-2.18zM236.98 354.74h2.18v2.18h-2.18zM241.43 354.74h2.18v2.18h-2.18zM245.04 354.74h2.18v2.18h-2.18zM249.49 354.74h2.18v2.18h-2.18zM253.10 354.74h2.18v2.18h-2.18zM257.55 354.74h2.18v2.18h-2.18zM261.16 354.74h2.18v2.18h-2.18zM265.61 354.74h2.18v2.18h-2.18zM269.23 354.74h2.18v2.18h-2.18zM273.68 354.74h2.18v2.18h-2.18zM277.29 354.74h2.18v2.18h-2.18zM281.74 354.74h2.18v2.18h-2.18zM285.35 354.74h2.18v2.18h-2.18zM289.80 354.74h2.18v2.18h-2.18zM293.41 354.74h2.18v2.18h-2.18zM297.86 354.74h2.18v2.18h-2.18zM301.47 354.74h2.18v2.18h-2.18zM305.92 354.74h2.18v2.18h-2.18zM309.54 354.74h2.18v2.18h-2.18zM313.99 354.74h2.18v2.18h-2.18zM317.60 354.74h2.18v2.18h-2.18zM322.05 354.74h2.18v2.18h-2.18zM325.66 354.74h2.18v2.18h-2.18zM330.11 354.74h2.18v2.18h-2.18zM333.72 354.74h2.18v2.18h-2.18zM338.17 354.74h2.18v2.18h-2.18zM341.78 354.74h2.18v2.18h-2.18zM346.23 354.74h2.18v2.18h-2.18zM349.85 354.74h2.18v2.18h-2.18zM354.30 354.74h2.18v2.18h-2.18zM357.91 354.74h2.18v2.18h-2.18zM362.36 354.74h2.18v2.18h-2.18zM365.97 354.74h2.18v2.18h-2.18zM370.42 354.74h2.18v2.18h-2.18zM374.03 354.74h2.18v2.18h-2.18zM378.48 354.74h2.18v2.18h-2.18zM382.09 354.74h2.18v2.18h-2.18zM386.54 354.74h2.18v2.18h-2.18zM390.16 354.74h2.18v2.18h-2.18zM394.61 354.74h2.18v2.18h-2.18zM398.22 354.74h2.18v2.18h-2.18zM402.67 354.74h2.18v2.18h-2.18zM406.28 354.74h2.18v2.18h-2.18zM410.73 354.74h2.18v2.18h-2.18zM414.34 354.74h2.18v2.18h-2.18zM418.79 354.74h2.18v2.18h-2.18zM422.40 354.74h2.18v2.18h-2.18zM426.85 354.74h2.18v2.18h-2.18zM430.47 354.74h2.18v2.18h-2.18zM434.92 354.74h2.18v2.18h-2.18zM438.53 354.74h2.18v2.18h-2.18zM442.98 354.74h2.18v2.18h-2.18zM446.59 354.74h2.18v2.18h-2.18zM451.04 354.74h2.18v2.18h-2.18zM454.65 354.74h2.18v2.18h-2.18zM459.10 354.74h2.18v2.18h-2.18zM462.71 354.74h2.18v2.18h-2.18zM467.16 354.74h2.18v2.18h-2.18zM470.78 354.74h2.18v2.18h-2.18zM475.23 354.74h2.18v2.18h-2.18zM478.84 354.74h2.18v2.18h-2.18zM483.29 354.74h2.18v2.18h-2.18zM486.90 354.74h2.18v2.18h-2.18zM491.35 354.74h2.18v2.18h-2.18zM494.96 354.74h2.18v2.18h-2.18zM499.41 354.74h2.18v2.18h-2.18zM503.02 354.74h2.18v2.18h-2.18zM507.47 354.74h2.18v2.18h-2.18zM511.09 354.74h2.18v2.18h-2.18zM515.54 354.74h2.18v2.18h-2.18zM519.15 354.74h2.18v2.18h-2.18zM523.60 354.74h2.18v2.18h-2.18zM527.21 354.74h2.18v2.18h-2.18zM531.66 354.74h2.18v2.18h-2.18zM535.27 354.74h2.18v2.18h-2.18zM539.72 354.74h2.18v2.18h-2.18zM543.33 354.74h2.18v2.18h-2.18zM547.78 354.74h2.18v2.18h-2.18zM551.40 354.74h2.18v2.18h-2.18zM555.85 354.74h2.18v2.18h-2.18zM559.46 354.74h2.18v2.18h-2.18zM563.91 354.74h2.18v2.18h-2.18zM567.52 354.74h2.18v2.18h-2.18zM571.97 354.74h2.18v2.18h-2.18zM575.58 354.74h2.18v2.18h-2.18zM580.03 354.74h2.18v2.18h-2.18zM583.64 354.74h2.18v2.18h-2.18zM588.09 354.74h2.18v2.18h-2.18zM591.71 354.74h2.18v2.18h-2.18zM596.16 354.74h2.18v2.18h-2.18zM599.77 354.74h2.18v2.18h-2.18zM604.22 354.74h2.18v2.18h-2.18zM607.83 354.74h2.18v2.18h-2.18zM612.28 354.74h2.18v2.18h-2.18zM615.89 354.74h2.18v2.18h-2.18zM620.34 354.74h2.18v2.18h-2.18zM623.95 354.74h2.18v2.18h-2.18zM628.40 354.74h2.18v2.18h-2.18z" fill="#06989a"/>
<path d="M88.25 389.44h2.18v2.18h-2.18zM91.86 320.10h2.18v2.18h-2.18zM91.86 324.30h2.18v2.18h-2.18zM91.86 328.55h2.18v2.18h-2.18zM91.86 331.07h2.18v2.18h-2.18zM91.86 335.32h2.18v2.18h-2.18zM91.86 339.52h2.18v2.18h-2.18zM91.86 343.77h2.18v2.18h-2.18zM96.31 285.40h2.18v2.18h-2.18zM96.31 289.65h2.18v2.18h-2.18zM96.31 293.85h2.18v2.18h-2.18zM96.31 298.10h2.18v2.18h-2.18zM96.31 300.62h2.18v2.18h-2.18zM96.31 304.87h2.18v2.18h-2.18zM96.31 309.07h2.18v2.18h-2.18zM96.31 313.32h2.18v2.18h-2.18zM96.31 315.85h2.18v2.18h-2.18zM99.92 285.40h2.18v2.18h-2.18zM104.37 285.40h2.18v2.18h-2.18zM107.99 285.40h2.18v2.18h-2.18zM112.44 282.88h2.18v2.18h-2.18zM116.05 282.88h2.18v2.18h-2.18zM120.50 282.88h2.18v2.18h-2.18zM124.11 282.88h2.18v2.18h-2.18zM128.56 282.88h2.18v2.18h-2.18zM132.17 282.88h2.18v2.18h-2.18zM136.62 282.88h2.18v2.18h-2.18zM140.23 282.88h2.18v2.18h-2.18zM144.68 282.88h2.18v2.18h-2.18zM148.30 282.88h2.18v2.18h-2.18zM152.75 282.88h2.18v2.18h-2.18zM156.36 282.88h2.18v2.18h-2.18zM160.81 282.88h2.18v2.18h-2.18zM164.42 282.88h2.18v2.18h-2.18zM168.87 282.88h2.18v2.18h-2.18zM172.48 282.88h2.18v2.18h-2.18zM176.93 282.88h2.18v2.18h-2.18zM180.54 282.88h2.18v2.18h-2.18zM184.99 282.88h2.18v2.18h-2.18zM188.61 282.88h2.18v2.18h-2.18zM193.06 282.88h2.18v2.18h-2.18zM196.67 282.88h2.18v2.18h-2.18zM201.12 282.88h2.18v2.18h-2.18zM204.73 282.88h2.18v2.18h-2.18zM209.18 282.88h2.18v2.18h-2.18zM212.79 282.88h2.18v2.18h-2.18zM217.24 282.88h2.18v2.18h-2.18zM220.85 282.88h2.18v2.18h-2.18zM225.30 282.88h2.18v2.18h-2.18zM228.92 282.88h2.18v2.18h-2.18zM233.37 282.88h2.18v2.18h-2.18zM236.98 282.88h2.18v2.18h-2.18zM241.43 282.88h2.18v2.18h-2.18zM245.04 282.88h2.18v2.18h-2.18zM249.49 282.88h2.18v2.18h-2.18zM253.10 282.88h2.18v2.18h-2.18zM257.55 282.88h2.18v2.18h-2.18zM261.16 282.88h2.18v2.18h-2.18zM265.61 282.88h2.18v2.18h-2.18zM269.23 282.88h2.18v2.18h-2.18zM273.68 282.88h2.18v2.18h-2.18zM277.29 282.88h2.18v2.18h-2.18zM281.74 282.88h2.18v2.18h-2.18zM285.35 282.88h2.18v2.18h-2.18zM289.80 282.88h2.18v2.18h-2.18zM293.41 282.88h2.18v2.18h-2.18zM297.86 282.88h2.18v2.18h-2.18zM301.47 282.88h2.18v2.18h-2.18zM305.92 282.88h2.18v2.18h-2.18zM309.54 282.88h2.18v2.18h-2.18zM313.99 282.88h2.18v2.18h-2.18zM317.60 282.88h2.18v2.18h-2.18zM322.05 282.88h2.18v2.18h-2.18zM325.66 282.88h2.18v2.18h-2.18zM330.11 282.88h2.18v2.18h-2.18zM333.72 282.88h2.18v2.18h-2.18zM338.17 282.88h2.18v2.18h-2.18zM341.78 282.88h2.18v2.18h-2.18zM346.23 282.88h2.18v2.18h-2.18zM349.85 282.88h2.18v2.18h-2.18zM354.30 282.88h2.18v2.18h-2.18zM357.91 282.88h2.18v2.18h-2.18zM362.36 282.88h2.18v2.18h-2.18zM365.97 282.88h2.18v2.18h-2.18zM370.42 282.88h2.18v2.18h-2.18zM374.03 282.88h2.18v2.18h-2.18zM378.48 282.88h2.18v2.18h-2.18zM382.09 282.88h2.18v2.18h-2.18zM386.54 282.88h2.18v2.18h-2.18zM390.16 282.88h2.18v2.18h-2.18zM394.61 282.88h2.18v2.18h-2.18zM398.22 282.88h2.18v2.18h-2.18zM402.67 282.88h2.18v2.18h-2.18zM406.28 282.88h2.18v2.18h-2.18zM410.73 282.88h2.18v2.18h-2.18zM414.34 282.88h2.18v2.18h-2.18zM418.79 282.88h2.18v2.18h-2.18zM422.40 282.88h2.18v2.18h-2.18zM426.85 282.88h2.18v2.18h-2.18zM430.47 282.88h2.18v2.18h-2.18zM434.92 282.88h2.18v2.18h-2.18zM438.53 282.88h2.18v2.18h-2.18zM442.98 282.88h2.18v2.18h-2.18zM446.59 282.88h2.18v2.18h-2.18zM451.04 282.88h2.18v2.18h-2.18zM454.65 282.88h2.18v2.18h-2.18zM459.10 282.88h2.18v2.18h-2.18zM462.71 282.88h2.18v2.18h-2.18zM467.16 282.88h2.18v2.18h-2.18zM470.78 282.88h2.18v2.18h-2.18zM475.23 282.88h2.18v2.18h-2.18zM478.84 282.88h2.18v2.18h-2.18zM483.29 282.88h2.18v2.18h-2.18zM486.90 282.88h2.18v2.18h-2.18zM491.35 282.88h2.18v2.18h-2.18zM494.96 282.88h2.18v2.18h-2.18zM499.41 282.88h2.18v2.18h-2.18zM503.02 282.88h2.18v2.18h-2.18zM507.47 282.88h2.18v2.18h-2.18zM511.09 282.88h2.18v2.18h-2.18zM515.54 282.88h2.18v2.18h-2.18zM519.15 282.88h2.18v2.18h-2.18zM523.60 282.88h2.18v2.18h-2.18zM527.21 282.88h2.18v2.18h-2.18zM531.66 282.88h2.18v2.18h-2.18zM535.27 282.88h2.18v2.18h-2.18zM539.72 282.88h2.18v2.18h-2.18zM543.33 282.88h2.18v2.18h-2.18zM547.78 282.88h2.18v2.18h-2.18zM551.40 282.88h2.18v2.18h-2.18zM555.85 282.88h2.18v2.18h-2.18zM559.46 282.88h2.18v2.18h-2.18zM563.91 282.88h2.18v2.18h-2.18zM567.52 282.88h2.18v2.18h-2.18zM571.97 282.88h2.18v2.18h-2.18zM575.58 282.88h2.18v2.18h-2.18zM580.03 282.88h2.18v2.18h-2.18zM583.64 282.88h2.18v2.18h-2.18zM588.09 282.88h2.18v2.18h-2.18zM591.71 282.88h2.18v2.18h-2.18zM596.16 282.88h2.18v2.18h-2.18zM599.77 282.88h2.18v2.18h-2.18zM604.22 282.88h2.18v2.18h-2.18zM607.83 282.88h2.18v2.18h-2.18zM612.28 282.88h2.18v2.18h-2.18zM615.89 282.88h2.18v2.18h-2.18zM620.34 282.88h2.18v2.18h-2.18zM623.95 282.88h2.18v2.18h-2.18zM628.40 282.88h2.18v2.18h-2.18z" fill="#75507b"/>
<path d="M51.94 270.18h2.0v2.18h-2.0zM51.94 274.43h2.0v2.18h-2.0zM51.94 278.63h2.0v2.18h-2.0zM51.94 282.88h2.0v2.18h-2.0zM51.94 285.40h2.0v2.18h-2.0zM51.94 289.65h2.0v2.18h-2.0zM51.94 293.85h2.0v2.18h-2.0zM51.94 298.10h2.0v2.18h-2.0zM51.94 300.62h2.0v2.18h-2.0zM51.94 304.87h2.0v2.18h-2.0zM51.94 309.07h2.0v2.18h-2.0zM51.94 313.32h2.0v2.18h-2.0zM51.94 315.85h2.0v2.18h-2.0zM51.94 320.10h2.0v2.18h-2.0zM51.94 324.30h2.0v2.18h-2.0zM51.94 328.55h2.0v2.18h-2.0zM51.94 331.07h2.0v2.18h-2.0zM51.94 335.32h2.0v2.18h-2.0zM51.94 339.52h2.0v2.18h-2.0zM51.94 343.77h2.0v2.18h-2.0zM51.94 346.29h2.0v2.18h-2.0zM51.94 350.54h2.0v2.18h-2.0zM51.94 354.74h2.0v2.18h-2.0zM51.94 358.99h2.0v2.18h-2.0zM51.94 361.52h2.0v2.18h-2.0zM51.94 365.77h2.0v2.18h-2.0zM51.94 369.97h2.0v2.18h-2.0zM51.94 374.22h2.0v2.18h-2.0zM51.94 376.74h2.0v2.18h-2.0zM51.94 380.99h2.0v2.18h-2.0zM51.94 385.19h2.0v2.18h-2.0zM51.94 389.44h2.0v2.18h-2.0zM51.94 391.96h2.0v2.18h-2.0zM51.94 396.21h2.0v2.18h-2.0zM51.94 400.41h2.0v2.18h-2.0zM51.94 404.66h2.0v2.18h-2.0zM51.94 407.19h2.0v2.18h-2.0zM51.94 411.44h2.0v2.18h-2.0zM51.94 415.64h2.0v2.18h-2.0zM51.94 419.89h2.0v2.18h-2.0zM51.94 422.41h2.0v2.18h-2.0zM51.94 426.66h2.0v2.18h-2.0zM56.39 426.66h2.0v2.18h-2.0zM60.00 426.66h2.0v2.18h-2.0zM64.45 426.66h2.0v2.18h-2.0zM68.07 426.66h2.0v2.18h-2.0zM72.52 426.66h2.0v2.18h-2.0zM76.13 426.66h2.0v2.18h-2.0zM80.58 426.66h2.0v2.18h-2.0zM84.19 426.66h2.0v2.18h-2.0zM88.64 426.66h2.0v2.18h-2.0zM92.25 426.66h2.0v2.18h-2.0zM96.70 426.66h2.0v2.18h-2.0zM100.31 426.66h2.0v2.18h-2.0zM104.76 426.66h2.0v2.18h-2.0zM108.38 426.66h2.0v2.18h-2.0zM112.83 426.66h2.0v2.18h-2.0zM116.44 426.66h2.0v2.18h-2.0zM120.89 426.66h2.0v2.18h-2.0zM124.50 426.66h2.0v2.18h-2.0zM128.95 426.66h2.0v2.18h-2.0zM132.56 426.66h2.0v2.18h-2.0zM137.01 426.66h2.0v2.18h-2.0zM140.62 426.66h2.0v2.18h-2.0zM145.07 426.66h2.0v2.18h-2.0zM148.69 426.66h2.0v2.18h-2.0zM153.14 426.66h2.0v2.18h-2.0zM156.75 426.66h2.0v2.18h-2.0zM161.20 426.66h2.0v2.18h-2.0zM164.81 426.66h2.0v2.18h-2.0zM169.26 426.66h2.0v2.18h-2.0zM172.87 426.66h2.0v2.18h-2.0zM177.32 426.66h2.0v2.18h-2.0zM180.93 426.66h2.0v2.18h-2.0zM185.38 426.66h2.0v2.18h-2.0zM189.00 426.66h2.0v2.18h-2.0zM193.45 426.66h2.0v2.18h-2.0zM197.06 426.66h2.0v2.18h-2.0zM201.51 426.66h2.0v2.18h-2.0zM205.12 426.66h2.0v2.18h-2.0zM209.57 426.66h2.0v2.18h-2.0zM213.18 426.66h2.0v2.18h-2.0zM217.63 426.66h2.0v2.18h-2.0zM221.24 426.66h2.0v2.18h-2.0zM225.69 426.66h2.0v2.18h-2.0zM229.31 426.66h2.0v2.18h-2.0zM233.76 426.66h2.0v2.18h-2.0zM237.37 426.66h2.0v2.18h-2.0zM241.82 426.66h2.0v2.18h-2.0zM245.43 426.66h2.0v2.18h-2.0zM249.88 426.66h2.0v2.18h-2.0zM253.49 426.66h2.0v2.18h-2.0zM257.94 426.66h2.0v2.18h-2.0zM261.55 426.66h2.0v2.18h-2.0zM266.00 426.66h2.0v2.18h-2.0zM269.62 426.66h2.0v2.18h-2.0zM274.07 426.66h2.0v2.18h-2.0zM277.68 426.66h2.0v2.18h-2.0zM282.13 426.66h2.0v2.18h-2.0zM285.74 426.66h2.0v2.18h-2.0zM290.19 426.66h2.0v2.18h-2.0zM293.80 426.66h2.0v2.18h-2.0zM298.25 426.66h2.0v2.18h-2.0zM301.86 426.66h2.0v2.18h-2.0zM306.31 426.66h2.0v2.18h-2.0zM309.93 426.66h2.0v2.18h-2.0zM314.38 426.66h2.0v2.18h-2.0zM317.99 426.66h2.0v2.18h-2.0zM322.44 426.66h2.0v2.18h-2.0zM326.05 426.66h2.0v2.18h-2.0zM330.50 426.66h2.0v2.18h-2.0zM334.11 426.66h2.0v2.18h-2.0zM338.56 426.66h2.0v2.18h-2.0zM342.17 426.66h2.0v2.18h-2.0zM346.62 426.66h2.0v2.18h-2.0zM350.24 426.66h2.0v2.18h-2.0zM354.69 426.66h2.0v2.18h-2.0zM358.30 426.66h2.0v2.18h-2.0zM362.75 426.66h2.0v2.18h-2.0zM366.36 426.66h2.0v2.18h-2.0zM370.81 426.66h2.0v2.18h-2.0zM374.42 426.66h2.0v2.18h-2.0zM378.87 426.66h2.0v2.18h-2.0zM382.48 426.66h2.0v2.18h-2.0zM386.93 426.66h2.0v2.18h-2.0zM390.55 426.66h2.0v2.18h-2.0zM395.00 426.66h2.0v2.18h-2.0zM398.61 426.66h2.0v2.18h-2.0zM403.06 426.66h2.0v2.18h-2.0zM406.67 426.66h2.0v2.18h-2.0zM411.12 426.66h2.0v2.18h-2.0zM414.73 426.66h2.0v2.18h-2.0zM419.18 426.66h2.0v2.18h-2.0zM422.79 426.66h2.0v2.18h-2.0zM427.24 426.66h2.0v2.18h-2.0zM430.86 426.66h2.0v2.18h-2.0zM435.31 426.66h2.0v2.18h-2.0zM438.92 426.66h2.0v2.18h-2.0zM443.37 426.66h2.0v2.18h-2.0zM446.98 426.66h2.0v2.18h-2.0zM451.43 426.66h2.0v2.18h-2.0zM455.04 426.66h2.0v2.18h-2.0zM459.49 426.66h2.0v2.18h-2.0zM463.10 426.66h2.0v2.18h-2.0zM467.55 426.66h2.0v2.18h-2.0zM471.17 426.66h2.0v2.18h-2.0zM475.62 426.66h2.0v2.18h-2.0zM479.23 426.66h2.0v2.18h-2.0zM483.68 426.66h2.0v2.18h-2.0zM487.29 426.66h2.0v2.18h-2.0zM491.74 426.66h2.0v2.18h-2.0zM495.35 426.66h2.0v2.18h-2.0zM499.80 426.66h2.0v2.18h-2.0zM503.41 426.66h2.0v2.18h-2.0zM507.86 426.66h2.0v2.18h-2.0zM511.48 426.66h2.0v2.18h-2.0zM515.93 426.66h2.0v2.18h-2.0zM519.54 426.66h2.0v2.18h-2.0zM523.99 426.66h2.0v2.18h-2.0zM527.60 426.66h2.0v2.18h-2.0zM532.05 426.66h2.0v2.18h-2.0zM535.66 426.66h2.0v2.18h-2.0zM540.11 426.66h2.0v2.18h-2.0zM543.72 426.66h2.0v2.18h-2.0zM548.17 426.66h2.0v2.18h-2.0zM551.79 426.66h2.0v2.18h-2.0zM556.24 426.66h2.0v2.18h-2.0zM559.85 426.66h2.0v2.18h-2.0zM564.30 426.66h2.0v2.18h-2.0zM567.91 426.66h2.0v2.18h-2.0zM572.36 426.66h2.0v2.18h-2.0zM575.97 426.66h2.0v2.18h-2.0zM580.42 426.66h2.0v2.18h-2.0zM584.03 426.66h2.0v2.18h-2.0zM588.48 426.66h2.0v2.18h-2.0zM592.10 426.66h2.0v2.18h-2.0zM596.55 426.66h2.0v2.18h-2.0zM600.16 426.66h2.0v2.18h-2.0zM604.61 426.66h2.0v2.18h-2.0zM608.22 426.66h2.0v2.18h-2.0zM612.67 426.66h2.0v2.18h-2.0zM616.28 426.66h2.0v2.18h-2.0zM620.73 426.66h2.0v2.18h-2.0zM624.34 426.66h2.0v2.18h-2.0zM628.79 426.66h2.0v2.18h-2.0z" fill="#3c3838"/>
<path d="M577.40 292.40H649.96" stroke="#2b3a40" stroke-width="0.9"/>
<path d="M577.40 338.07H649.96" stroke="#2b3a40" stroke-width="0.9"/>
<path d="M577.40 292.40V338.07" stroke="#2b3a40" stroke-width="0.9"/>
<path d="M649.96 292.40V338.07" stroke="#2b3a40" stroke-width="0.9"/>
<path d="M673.67 261.96H686.24" stroke="#06989a" stroke-width="0.95"/>
<path d="M734.61 261.96H997.10" stroke="#06989a" stroke-width="0.95"/>
<path d="M674.15 353.29H996.63" stroke="#06989a" stroke-width="0.95"/>
<path d="M674.15 261.96V353.29" stroke="#06989a" stroke-width="0.95"/>
<path d="M996.63 261.96V353.29" stroke="#06989a" stroke-width="0.95"/>
<path d="M805.77 282.88h2.18v2.18h-2.18zM805.77 285.40h2.18v2.18h-2.18zM805.77 289.65h2.18v2.18h-2.18zM805.77 293.85h2.18v2.18h-2.18zM805.77 298.10h2.18v2.18h-2.18zM805.77 300.62h2.18v2.18h-2.18zM805.77 304.87h2.18v2.18h-2.18zM809.38 278.63h2.18v2.18h-2.18zM809.38 282.88h2.18v2.18h-2.18zM809.38 285.40h2.18v2.18h-2.18zM809.38 289.65h2.18v2.18h-2.18zM809.38 293.85h2.18v2.18h-2.18zM809.38 298.10h2.18v2.18h-2.18zM809.38 300.62h2.18v2.18h-2.18zM809.38 304.87h2.18v2.18h-2.18zM809.38 309.07h2.18v2.18h-2.18zM813.83 274.43h2.18v2.18h-2.18zM813.83 278.63h2.18v2.18h-2.18zM813.83 282.88h2.18v2.18h-2.18zM813.83 285.40h2.18v2.18h-2.18zM813.83 289.65h2.18v2.18h-2.18zM813.83 293.85h2.18v2.18h-2.18zM813.83 298.10h2.18v2.18h-2.18zM813.83 300.62h2.18v2.18h-2.18zM813.83 304.87h2.18v2.18h-2.18zM813.83 309.07h2.18v2.18h-2.18zM813.83 313.32h2.18v2.18h-2.18zM817.44 270.18h2.18v2.18h-2.18zM817.44 274.43h2.18v2.18h-2.18zM817.44 278.63h2.18v2.18h-2.18zM817.44 282.88h2.18v2.18h-2.18zM817.44 285.40h2.18v2.18h-2.18zM817.44 300.62h2.18v2.18h-2.18zM817.44 304.87h2.18v2.18h-2.18zM817.44 309.07h2.18v2.18h-2.18zM817.44 313.32h2.18v2.18h-2.18zM817.44 315.85h2.18v2.18h-2.18zM821.89 270.18h2.18v2.18h-2.18zM821.89 274.43h2.18v2.18h-2.18zM821.89 278.63h2.18v2.18h-2.18zM821.89 309.07h2.18v2.18h-2.18zM821.89 313.32h2.18v2.18h-2.18zM821.89 315.85h2.18v2.18h-2.18zM825.50 309.07h2.18v2.18h-2.18zM825.50 313.32h2.18v2.18h-2.18zM825.50 315.85h2.18v2.18h-2.18zM825.50 320.10h2.18v2.18h-2.18zM829.95 313.32h2.18v2.18h-2.18zM829.95 315.85h2.18v2.18h-2.18zM829.95 320.10h2.18v2.18h-2.18zM833.57 270.18h2.18v2.18h-2.18zM833.57 274.43h2.18v2.18h-2.18zM833.57 313.32h2.18v2.18h-2.18zM833.57 315.85h2.18v2.18h-2.18zM833.57 320.10h2.18v2.18h-2.18zM838.02 270.18h2.18v2.18h-2.18zM838.02 274.43h2.18v2.18h-2.18zM838.02 313.32h2.18v2.18h-2.18zM838.02 315.85h2.18v2.18h-2.18zM838.02 320.10h2.18v2.18h-2.18zM841.63 270.18h2.18v2.18h-2.18zM841.63 274.43h2.18v2.18h-2.18zM841.63 278.63h2.18v2.18h-2.18zM841.63 309.07h2.18v2.18h-2.18zM841.63 313.32h2.18v2.18h-2.18zM841.63 315.85h2.18v2.18h-2.18zM841.63 320.10h2.18v2.18h-2.18zM846.08 270.18h2.18v2.18h-2.18zM846.08 274.43h2.18v2.18h-2.18zM846.08 278.63h2.18v2.18h-2.18zM846.08 309.07h2.18v2.18h-2.18zM846.08 313.32h2.18v2.18h-2.18zM846.08 315.85h2.18v2.18h-2.18zM849.69 270.18h2.18v2.18h-2.18zM849.69 274.43h2.18v2.18h-2.18zM849.69 278.63h2.18v2.18h-2.18zM849.69 282.88h2.18v2.18h-2.18zM849.69 285.40h2.18v2.18h-2.18zM849.69 300.62h2.18v2.18h-2.18zM849.69 304.87h2.18v2.18h-2.18zM849.69 309.07h2.18v2.18h-2.18zM849.69 313.32h2.18v2.18h-2.18zM849.69 315.85h2.18v2.18h-2.18zM854.14 274.43h2.18v2.18h-2.18zM854.14 278.63h2.18v2.18h-2.18zM854.14 282.88h2.18v2.18h-2.18zM854.14 285.40h2.18v2.18h-2.18zM854.14 289.65h2.18v2.18h-2.18zM854.14 293.85h2.18v2.18h-2.18zM854.14 298.10h2.18v2.18h-2.18zM854.14 300.62h2.18v2.18h-2.18zM854.14 304.87h2.18v2.18h-2.18zM854.14 309.07h2.18v2.18h-2.18zM854.14 313.32h2.18v2.18h-2.18zM857.75 278.63h2.18v2.18h-2.18zM857.75 282.88h2.18v2.18h-2.18zM857.75 285.40h2.18v2.18h-2.18zM857.75 289.65h2.18v2.18h-2.18zM857.75 293.85h2.18v2.18h-2.18zM857.75 298.10h2.18v2.18h-2.18zM857.75 300.62h2.18v2.18h-2.18zM857.75 304.87h2.18v2.18h-2.18zM857.75 309.07h2.18v2.18h-2.18zM862.20 282.88h2.18v2.18h-2.18zM862.20 285.40h2.18v2.18h-2.18zM862.20 289.65h2.18v2.18h-2.18zM862.20 293.85h2.18v2.18h-2.18zM862.20 298.10h2.18v2.18h-2.18zM862.20 300.62h2.18v2.18h-2.18zM862.20 304.87h2.18v2.18h-2.18z" fill="#75507b"/>
<path d="M825.89 270.18h2.0v2.18h-2.0zM825.89 274.43h2.0v2.18h-2.0zM825.89 278.63h2.0v2.18h-2.0zM830.34 270.18h2.0v2.18h-2.0zM830.34 274.43h2.0v2.18h-2.0z" fill="#3c3838"/>
<path d="M673.67 368.52H686.24" stroke="#06989a" stroke-width="0.95"/>
<path d="M718.49 368.52H997.10" stroke="#06989a" stroke-width="0.95"/>
<path d="M674.15 459.86H996.63" stroke="#06989a" stroke-width="0.95"/>
<path d="M674.15 368.52V459.86" stroke="#06989a" stroke-width="0.95"/>
<path d="M996.63 368.52V459.86" stroke="#06989a" stroke-width="0.95"/>
<path d="M833.57 376.74h2.18v2.18h-2.18zM833.57 380.99h2.18v2.18h-2.18zM838.02 376.74h2.18v2.18h-2.18zM838.02 380.99h2.18v2.18h-2.18zM841.63 376.74h2.18v2.18h-2.18zM841.63 380.99h2.18v2.18h-2.18zM841.63 385.19h2.18v2.18h-2.18zM841.63 415.64h2.18v2.18h-2.18zM841.63 419.89h2.18v2.18h-2.18zM846.08 376.74h2.18v2.18h-2.18zM846.08 380.99h2.18v2.18h-2.18zM846.08 385.19h2.18v2.18h-2.18zM846.08 415.64h2.18v2.18h-2.18zM846.08 419.89h2.18v2.18h-2.18zM849.69 376.74h2.18v2.18h-2.18zM849.69 380.99h2.18v2.18h-2.18zM849.69 385.19h2.18v2.18h-2.18zM849.69 389.44h2.18v2.18h-2.18zM849.69 391.96h2.18v2.18h-2.18zM849.69 407.19h2.18v2.18h-2.18zM849.69 411.44h2.18v2.18h-2.18zM849.69 415.64h2.18v2.18h-2.18zM849.69 419.89h2.18v2.18h-2.18zM849.69 422.41h2.18v2.18h-2.18zM854.14 380.99h2.18v2.18h-2.18zM854.14 385.19h2.18v2.18h-2.18zM854.14 389.44h2.18v2.18h-2.18zM854.14 391.96h2.18v2.18h-2.18zM854.14 396.21h2.18v2.18h-2.18zM854.14 400.41h2.18v2.18h-2.18zM854.14 404.66h2.18v2.18h-2.18zM854.14 407.19h2.18v2.18h-2.18zM854.14 411.44h2.18v2.18h-2.18zM854.14 415.64h2.18v2.18h-2.18zM854.14 419.89h2.18v2.18h-2.18zM857.75 385.19h2.18v2.18h-2.18zM857.75 389.44h2.18v2.18h-2.18zM857.75 391.96h2.18v2.18h-2.18zM857.75 396.21h2.18v2.18h-2.18zM857.75 400.41h2.18v2.18h-2.18zM857.75 404.66h2.18v2.18h-2.18zM857.75 407.19h2.18v2.18h-2.18zM857.75 411.44h2.18v2.18h-2.18zM857.75 415.64h2.18v2.18h-2.18zM862.20 389.44h2.18v2.18h-2.18zM862.20 391.96h2.18v2.18h-2.18zM862.20 396.21h2.18v2.18h-2.18zM862.20 400.41h2.18v2.18h-2.18zM862.20 404.66h2.18v2.18h-2.18zM862.20 407.19h2.18v2.18h-2.18zM862.20 411.44h2.18v2.18h-2.18z" fill="#06989a"/>
<path d="M806.16 389.44h2.0v2.18h-2.0zM806.16 391.96h2.0v2.18h-2.0zM806.16 396.21h2.0v2.18h-2.0zM806.16 400.41h2.0v2.18h-2.0zM806.16 404.66h2.0v2.18h-2.0zM806.16 407.19h2.0v2.18h-2.0zM806.16 411.44h2.0v2.18h-2.0zM809.77 385.19h2.0v2.18h-2.0zM809.77 389.44h2.0v2.18h-2.0zM809.77 391.96h2.0v2.18h-2.0zM809.77 396.21h2.0v2.18h-2.0zM809.77 400.41h2.0v2.18h-2.0zM809.77 404.66h2.0v2.18h-2.0zM809.77 407.19h2.0v2.18h-2.0zM809.77 411.44h2.0v2.18h-2.0zM809.77 415.64h2.0v2.18h-2.0zM814.22 380.99h2.0v2.18h-2.0zM814.22 385.19h2.0v2.18h-2.0zM814.22 389.44h2.0v2.18h-2.0zM814.22 391.96h2.0v2.18h-2.0zM814.22 396.21h2.0v2.18h-2.0zM814.22 400.41h2.0v2.18h-2.0zM814.22 404.66h2.0v2.18h-2.0zM814.22 407.19h2.0v2.18h-2.0zM814.22 411.44h2.0v2.18h-2.0zM814.22 415.64h2.0v2.18h-2.0zM814.22 419.89h2.0v2.18h-2.0zM817.83 376.74h2.0v2.18h-2.0zM817.83 380.99h2.0v2.18h-2.0zM817.83 385.19h2.0v2.18h-2.0zM817.83 389.44h2.0v2.18h-2.0zM817.83 391.96h2.0v2.18h-2.0zM817.83 407.19h2.0v2.18h-2.0zM817.83 411.44h2.0v2.18h-2.0zM817.83 415.64h2.0v2.18h-2.0zM817.83 419.89h2.0v2.18h-2.0zM817.83 422.41h2.0v2.18h-2.0zM822.28 376.74h2.0v2.18h-2.0zM822.28 380.99h2.0v2.18h-2.0zM822.28 385.19h2.0v2.18h-2.0zM822.28 415.64h2.0v2.18h-2.0zM822.28 419.89h2.0v2.18h-2.0zM822.28 422.41h2.0v2.18h-2.0zM825.89 376.74h2.0v2.18h-2.0zM825.89 380.99h2.0v2.18h-2.0zM825.89 385.19h2.0v2.18h-2.0zM825.89 415.64h2.0v2.18h-2.0zM825.89 419.89h2.0v2.18h-2.0zM825.89 422.41h2.0v2.18h-2.0zM825.89 426.66h2.0v2.18h-2.0zM830.34 376.74h2.0v2.18h-2.0zM830.34 380.99h2.0v2.18h-2.0zM830.34 419.89h2.0v2.18h-2.0zM830.34 422.41h2.0v2.18h-2.0zM830.34 426.66h2.0v2.18h-2.0zM833.96 419.89h2.0v2.18h-2.0zM833.96 422.41h2.0v2.18h-2.0zM833.96 426.66h2.0v2.18h-2.0zM838.41 419.89h2.0v2.18h-2.0zM838.41 422.41h2.0v2.18h-2.0zM838.41 426.66h2.0v2.18h-2.0zM842.02 422.41h2.0v2.18h-2.0zM842.02 426.66h2.0v2.18h-2.0zM846.47 422.41h2.0v2.18h-2.0z" fill="#3c3838"/>
<path d="M4.53 596.86H17.09" stroke="#06989a" stroke-width="0.95"/>
<path d="M97.71 596.86H497.26" stroke="#06989a" stroke-width="0.95"/>
<path d="M5.00 688.20H496.78" stroke="#06989a" stroke-width="0.95"/>
<path d="M5.00 596.86V688.20" stroke="#06989a" stroke-width="0.95"/>
<path d="M496.78 596.86V688.20" stroke="#06989a" stroke-width="0.95"/>
<path d="M245.04 605.08h2.18v2.18h-2.18zM245.04 609.33h2.18v2.18h-2.18zM249.49 605.08h2.18v2.18h-2.18zM249.49 609.33h2.18v2.18h-2.18zM253.10 605.08h2.18v2.18h-2.18zM253.10 609.33h2.18v2.18h-2.18zM257.55 605.08h2.18v2.18h-2.18zM257.55 609.33h2.18v2.18h-2.18zM257.55 613.53h2.18v2.18h-2.18zM261.16 605.08h2.18v2.18h-2.18zM261.16 609.33h2.18v2.18h-2.18zM261.16 613.53h2.18v2.18h-2.18zM265.61 605.08h2.18v2.18h-2.18zM265.61 609.33h2.18v2.18h-2.18zM265.61 613.53h2.18v2.18h-2.18zM265.61 617.78h2.18v2.18h-2.18zM269.23 609.33h2.18v2.18h-2.18zM269.23 613.53h2.18v2.18h-2.18zM269.23 617.78h2.18v2.18h-2.18zM269.23 620.31h2.18v2.18h-2.18zM269.23 624.56h2.18v2.18h-2.18zM269.23 628.76h2.18v2.18h-2.18zM269.23 633.01h2.18v2.18h-2.18zM273.68 613.53h2.18v2.18h-2.18zM273.68 617.78h2.18v2.18h-2.18zM273.68 620.31h2.18v2.18h-2.18zM273.68 624.56h2.18v2.18h-2.18zM273.68 628.76h2.18v2.18h-2.18zM273.68 633.01h2.18v2.18h-2.18zM277.29 617.78h2.18v2.18h-2.18zM277.29 620.31h2.18v2.18h-2.18zM277.29 624.56h2.18v2.18h-2.18zM277.29 628.76h2.18v2.18h-2.18zM277.29 633.01h2.18v2.18h-2.18z" fill="#cc0000"/>
<path d="M221.24 617.78h2.0v2.18h-2.0zM221.24 620.31h2.0v2.18h-2.0zM221.24 624.56h2.0v2.18h-2.0zM221.24 628.76h2.0v2.18h-2.0zM221.24 633.01h2.0v2.18h-2.0zM221.24 635.53h2.0v2.18h-2.0zM221.24 639.78h2.0v2.18h-2.0zM225.69 613.53h2.0v2.18h-2.0zM225.69 617.78h2.0v2.18h-2.0zM225.69 620.31h2.0v2.18h-2.0zM225.69 624.56h2.0v2.18h-2.0zM225.69 628.76h2.0v2.18h-2.0zM225.69 633.01h2.0v2.18h-2.0zM225.69 635.53h2.0v2.18h-2.0zM225.69 639.78h2.0v2.18h-2.0zM225.69 643.98h2.0v2.18h-2.0zM229.31 609.33h2.0v2.18h-2.0zM229.31 613.53h2.0v2.18h-2.0zM229.31 617.78h2.0v2.18h-2.0zM229.31 620.31h2.0v2.18h-2.0zM229.31 624.56h2.0v2.18h-2.0zM229.31 628.76h2.0v2.18h-2.0zM229.31 633.01h2.0v2.18h-2.0zM229.31 635.53h2.0v2.18h-2.0zM229.31 639.78h2.0v2.18h-2.0zM229.31 643.98h2.0v2.18h-2.0zM229.31 648.23h2.0v2.18h-2.0zM233.76 605.08h2.0v2.18h-2.0zM233.76 609.33h2.0v2.18h-2.0zM233.76 613.53h2.0v2.18h-2.0zM233.76 617.78h2.0v2.18h-2.0zM233.76 620.31h2.0v2.18h-2.0zM233.76 635.53h2.0v2.18h-2.0zM233.76 639.78h2.0v2.18h-2.0zM233.76 643.98h2.0v2.18h-2.0zM233.76 648.23h2.0v2.18h-2.0zM233.76 650.75h2.0v2.18h-2.0zM237.37 605.08h2.0v2.18h-2.0zM237.37 609.33h2.0v2.18h-2.0zM237.37 613.53h2.0v2.18h-2.0zM237.37 643.98h2.0v2.18h-2.0zM237.37 648.23h2.0v2.18h-2.0zM237.37 650.75h2.0v2.18h-2.0zM241.82 605.08h2.0v2.18h-2.0zM241.82 609.33h2.0v2.18h-2.0zM241.82 613.53h2.0v2.18h-2.0zM241.82 643.98h2.0v2.18h-2.0zM241.82 648.23h2.0v2.18h-2.0zM241.82 650.75h2.0v2.18h-2.0zM241.82 655.00h2.0v2.18h-2.0zM245.43 648.23h2.0v2.18h-2.0zM245.43 650.75h2.0v2.18h-2.0zM245.43 655.00h2.0v2.18h-2.0zM249.88 648.23h2.0v2.18h-2.0zM249.88 650.75h2.0v2.18h-2.0zM249.88 655.00h2.0v2.18h-2.0zM253.49 648.23h2.0v2.18h-2.0zM253.49 650.75h2.0v2.18h-2.0zM253.49 655.00h2.0v2.18h-2.0zM257.94 643.98h2.0v2.18h-2.0zM257.94 648.23h2.0v2.18h-2.0zM257.94 650.75h2.0v2.18h-2.0zM257.94 655.00h2.0v2.18h-2.0zM261.55 643.98h2.0v2.18h-2.0zM261.55 648.23h2.0v2.18h-2.0zM261.55 650.75h2.0v2.18h-2.0zM266.00 635.53h2.0v2.18h-2.0zM266.00 639.78h2.0v2.18h-2.0zM266.00 643.98h2.0v2.18h-2.0zM266.00 648.23h2.0v2.18h-2.0zM266.00 650.75h2.0v2.18h-2.0zM269.62 635.53h2.0v2.18h-2.0zM269.62 639.78h2.0v2.18h-2.0zM269.62 643.98h2.0v2.18h-2.0zM269.62 648.23h2.0v2.18h-2.0zM274.07 635.53h2.0v2.18h-2.0zM274.07 639.78h2.0v2.18h-2.0zM274.07 643.98h2.0v2.18h-2.0zM277.68 635.53h2.0v2.18h-2.0zM277.68 639.78h2.0v2.18h-2.0z" fill="#3c3838"/>
<path d="M4.53 490.30H17.09" stroke="#06989a" stroke-width="0.95"/>
<path d="M138.02 490.30H497.26" stroke="#06989a" stroke-width="0.95"/>
<path d="M5.00 581.64H496.78" stroke="#06989a" stroke-width="0.95"/>
<path d="M5.00 490.30V581.64" stroke="#06989a" stroke-width="0.95"/>
<path d="M496.78 490.30V581.64" stroke="#06989a" stroke-width="0.95"/>
<rect x="9.03" y="555.91" width="483.72" height="2.9" fill="#3465a4"/>
<rect x="210.58" y="543.58" width="8.06" height="15.22" fill="#3465a4"/>
<path d="M504.37 490.30H516.94" stroke="#06989a" stroke-width="0.95"/>
<path d="M589.50 490.30H997.10" stroke="#06989a" stroke-width="0.95"/>
<path d="M504.84 703.42H996.63" stroke="#06989a" stroke-width="0.95"/>
<path d="M504.84 490.30V703.42" stroke="#06989a" stroke-width="0.95"/>
<path d="M996.63 490.30V703.42" stroke="#06989a" stroke-width="0.95"/>
</svg>
<div id="term">
<span id="tri">&#9650;</span>
<span class="t lab" style="left:17.09px;top:26.60px">CPU History</span>
<span class="t g" style="left:25.16px;top:57.05px">80</span>
<span class="t g" style="left:25.16px;top:87.49px">60</span>
<span class="t g" style="left:25.16px;top:117.94px">40</span>
<span class="t g" style="left:25.16px;top:148.38px">20</span>
<span class="t g" style="left:25.16px;top:178.83px">0</span>
<span class="t m" style="left:879.73px;top:72.27px">CPU1   9.0%</span>
<span class="t c" style="left:879.73px;top:87.49px">CPU2  20.8%</span>
<span class="t lab" style="left:17.09px;top:254.94px">Memory and Swap History</span>
<span class="t g" style="left:25.16px;top:285.39px">80</span>
<span class="t g" style="left:25.16px;top:315.84px">60</span>
<span class="t g" style="left:25.16px;top:346.28px">40</span>
<span class="t g" style="left:25.16px;top:376.73px">20</span>
<span class="t g" style="left:25.16px;top:407.18px">0</span>
<span class="t m" style="left:581.43px;top:300.61px">Memory</span>
<span class="t c" style="left:581.43px;top:315.84px">Swap</span>
<span class="t lab" style="left:686.24px;top:254.94px">Memory</span>
<span class="t w" style="left:823.29px;top:285.39px">86%</span>
<span class="t lab" style="left:686.24px;top:361.51px">Swap</span>
<span class="t w" style="left:823.29px;top:391.95px">40%</span>
<span class="t lab" style="left:17.09px;top:589.85px">Disk usage</span>
<span class="t w" style="left:242.83px;top:620.30px">24%</span>
<span class="t lab" style="left:17.09px;top:483.29px">Network History</span>
<span class="t bw" style="left:9.03px;top:513.74px">Receiving:      0.00 B/s</span>
<span class="t bw" style="left:9.03px;top:528.96px">Total received: 322.16 MiB:</span>
<span class="t lab" style="left:516.94px;top:483.29px">Processes</span>
<span class="t hb" style="left:508.88px;top:498.51px">PID</span>
<span class="t hb" style="left:565.31px;top:498.51px">Command</span>
<span class="t hb" style="left:758.80px;top:498.51px">%CPU</span>
<span class="t hb" style="left:815.23px;top:498.51px">%MEM</span>
<span class="t s" style="left:516.94px;top:528.96px">2405</span>
<span class="t s" style="left:573.37px;top:528.96px">/usr/lib/firefox/firefox</span>
<span class="t s" style="left:774.92px;top:528.96px">6.0</span>
<span class="t s" style="left:823.29px;top:528.96px">22.3</span>
<span class="t g" style="left:516.94px;top:544.18px">1689</span>
<span class="t g" style="left:573.37px;top:544.18px">/usr/bin/compiz</span>
<span class="t g" style="left:774.92px;top:544.18px">3.8</span>
<span class="t g" style="left:823.29px;top:544.18px">14.4</span>
<span class="t g" style="left:516.94px;top:559.41px">15762</span>
<span class="t g" style="left:573.37px;top:559.41px">node /usr/bin/gtop</span>
<span class="t g" style="left:774.92px;top:559.41px">2.6</span>
<span class="t g" style="left:823.29px;top:559.41px">4.3</span>
<span class="t g" style="left:516.94px;top:574.63px">956</span>
<span class="t g" style="left:573.37px;top:574.63px">/usr/lib/xorg/Xorg -core</span>
<span class="t g" style="left:774.92px;top:574.63px">1.0</span>
<span class="t g" style="left:823.29px;top:574.63px">5.4</span>
<span class="t g" style="left:516.94px;top:589.85px">2308</span>
<span class="t g" style="left:573.37px;top:589.85px">/usr/lib/firefox/firefox</span>
<span class="t g" style="left:774.92px;top:589.85px">0.9</span>
<span class="t g" style="left:823.29px;top:589.85px">12.7</span>
<span class="t g" style="left:516.94px;top:605.07px">31268</span>
<span class="t g" style="left:573.37px;top:605.07px">/usr/bin/python3 /usr/bi</span>
<span class="t g" style="left:774.92px;top:605.07px">0.5</span>
<span class="t g" style="left:823.29px;top:605.07px">1.9</span>
<span class="t g" style="left:516.94px;top:620.30px">31376</span>
<span class="t g" style="left:573.37px;top:620.30px">/usr/lib/gnome-terminal/</span>
<span class="t g" style="left:774.92px;top:620.30px">0.3</span>
<span class="t g" style="left:823.29px;top:620.30px">1.3</span>
<span class="t g" style="left:516.94px;top:635.52px">1111</span>
<span class="t g" style="left:573.37px;top:635.52px">/usr/lib/rtkit/rtkit-dae</span>
<span class="t g" style="left:774.92px;top:635.52px">0.0</span>
<span class="t g" style="left:823.29px;top:635.52px">0.0</span>
<span class="t g" style="left:516.94px;top:650.74px">11</span>
<span class="t g" style="left:573.37px;top:650.74px">watchdog/0</span>
<span class="t g" style="left:774.92px;top:650.74px">0.0</span>
<span class="t g" style="left:823.29px;top:650.74px">0.0</span>
<span class="t g" style="left:516.94px;top:665.97px">12</span>
<span class="t g" style="left:573.37px;top:665.97px">cpuhp/0</span>
<span class="t g" style="left:774.92px;top:665.97px">0.0</span>
<span class="t g" style="left:823.29px;top:665.97px">0.0</span>
<span class="t g" style="left:516.94px;top:681.19px">13</span>
<span class="t g" style="left:573.37px;top:681.19px">cpuhp/1</span>
<span class="t g" style="left:774.92px;top:681.19px">0.0</span>
<span class="t g" style="left:823.29px;top:681.19px">0.0</span>
</div>
</body></html>
